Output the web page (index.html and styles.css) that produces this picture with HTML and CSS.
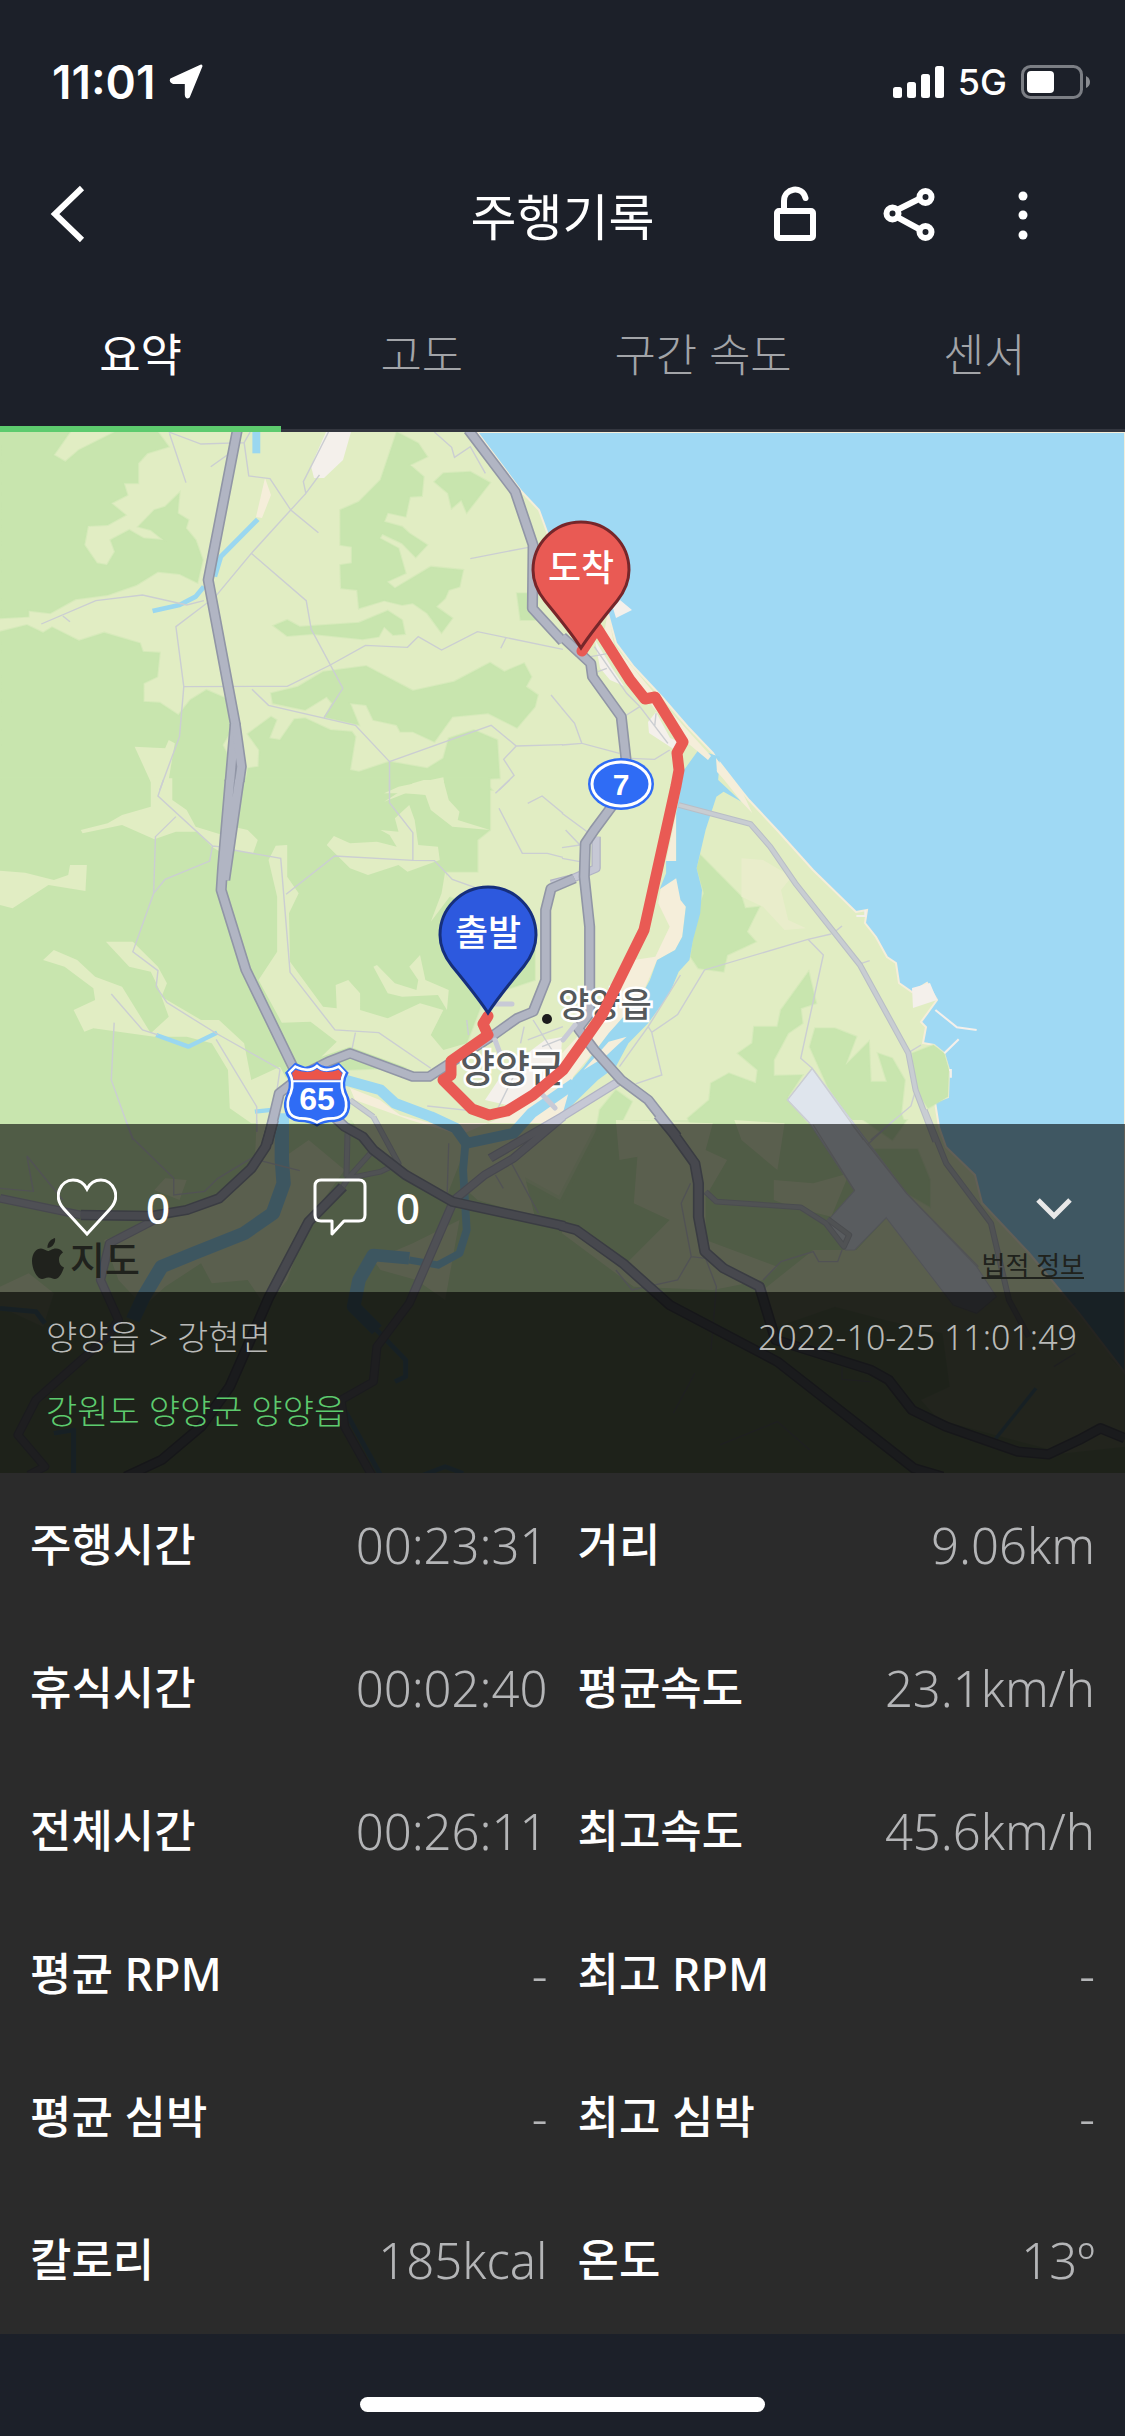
FILE: index.html
```html
<!DOCTYPE html>
<html lang="ko">
<head>
<meta charset="utf-8">
<meta name="viewport" content="width=device-width, initial-scale=1">
<title>주행기록</title>
<link rel="stylesheet" href="styles.css">
</head>
<body>
<div class="app">
  <header class="status">
    <div class="status-group">
      <span class="clock">11:01</span>
      <svg width="36" height="36" viewBox="0 0 36 36" aria-hidden="true"><path d="M2.500 15.500 L32 2 L19.500 32.500 Q17.500 34 17.300 31 V18.500 H4.500 Q1.500 17.500 2.500 15.500Z" fill="#fff" stroke="#fff" stroke-width="3" stroke-linejoin="round"/></svg>
    </div>
    <div class="status-group status-right">
      <svg width="51" height="32" viewBox="0 0 51 32" fill="#fff" aria-hidden="true"><rect y="21" width="9" height="11" rx="2.500"/><rect x="14" y="16" width="9" height="16" rx="2.500"/><rect x="28" y="8" width="9" height="24" rx="2.500"/><rect x="42" width="9" height="32" rx="2.500"/></svg>
      <span class="network">5G</span>
      <svg width="70" height="34" viewBox="0 0 70 34" aria-hidden="true"><rect x="1.500" y="1.500" width="59" height="31" rx="8" fill="none" stroke="#7b7e84" stroke-width="3"/><rect x="6" y="6" width="27" height="22" rx="4" fill="#fff"/><path d="M65 11 Q69 13 69 17 Q69 21 65 23Z" fill="#8a8c91"/></svg>
    </div>
  </header>

  <nav class="bar">
    <button class="icon-button back" type="button" aria-label="뒤로"><svg width="45" height="60" viewBox="0 0 45 60"><path d="M37 4 L10 30 L37 56" fill="none" stroke="#fff" stroke-width="6"/></svg></button>
    <h1 class="title">주행기록</h1>
    <div class="actions">
      <button class="icon-button" type="button" aria-label="공개 설정"><svg width="48" height="60" viewBox="0 0 48 60" fill="none" stroke="#fff" stroke-width="6" stroke-linecap="round"><rect x="6" y="27" width="36" height="27" rx="2"/><path d="M13 26 V17 C13 4 31 1 34.500 14"/></svg></button>
      <button class="icon-button" type="button" aria-label="공유"><svg width="54" height="60" viewBox="0 0 54 60" fill="none" stroke="#fff" stroke-width="6"><path d="M15 26 L37 15 M15 33 L37 45"/><circle cx="10.500" cy="29.500" r="6"/><circle cx="43.500" cy="13" r="6"/><circle cx="43.500" cy="48" r="6"/></svg></button>
      <button class="icon-button" type="button" aria-label="더보기"><svg width="20" height="60" viewBox="0 0 20 60" fill="#fff"><circle cx="10" cy="12" r="4.500"/><circle cx="10" cy="31" r="4.500"/><circle cx="10" cy="51" r="4.500"/></svg></button>
    </div>
  </nav>

  <nav class="tabs">
    <a class="tab active" href="#summary" aria-current="page">요약</a>
    <a class="tab" href="#altitude">고도</a>
    <a class="tab" href="#speed">구간 속도</a>
    <a class="tab" href="#sensor">센서</a>
  </nav>

  <section class="map" id="summary">
    <svg class="map-canvas" viewBox="0 432 1125 1041" role="img" aria-label="주행 경로 지도">
      <defs>
        <g id="highways">
          <g transform="translate(0 430) scale(.359 .3333)">
            <path d="M661 0 580 450 655 880 641 1055M1305 0 1435 185 1485 345 1483 535 1568 635"/>
            <path d="M655 880 672 1010 666 1055"/>
          </g>
          <g transform="translate(562 430) scale(.359 .3333)"><path d="M0 620 50 670 80 700 85 740 165 860 178 985 170 1060"/></g>
          <g transform="translate(0 780) scale(.359 .3333)">
            <path d="M641 0 620 265 616 330 685 570 820 870M666 0 626 300"/>
            <path d="M1600 295 1535 325 1520 390 1520 600 1485 695 1440 715 1375 765 1195 890 1150 890 975 820 915 845 850 880 778 940 745 1090"/>
          </g>
          <g transform="translate(562 780) scale(.359 .3333)"><path d="M145 70 90 150 65 190 62 290 77 440 77 700 45 745 90 810 165 900 240 960 320 1070"/></g>
          <g transform="translate(0 1120) scale(.359 .3333)">
            <path d="M762 0 740 80 700 145 610 235 520 270 420 288 225 285"/>
            <path d="M900 -40 960 20 1010 50 1040 90 1130 165 1260 245 1572 318"/>
            <path d="M955 200 860 305 750 530 640 800 560 920 450 1020 350 1070"/>
          </g>
          <g transform="translate(562 1120) scale(.359 .3333)">
            <path d="M-5 317 40 330 170 430 300 555 600 725 980 1045 1060 1070"/>
            <path d="M268 -15 310 40 370 130 380 190 380 290 398 395 450 445 550 500 595 660 860 750 910 780 975 870 1070 920 1270 995 1355 1003 1440 960 1500 925 1568 955"/>
          </g>
        </g>
        <g id="roads">
          <g transform="translate(562 780) scale(.359 .3333)"><path d="M325 75 525 132 580 200 650 310 830 555 965 820 985 930 1040 1085"/></g>
          <g transform="translate(562 1120) scale(.359 .3333)"><path d="M1010 -30 1070 130 1195 310 1245 540 1300 650M400 215 430 245 665 262 735 310 785 380 800 345 740 297"/></g>
          <g transform="translate(0 1120) scale(.359 .3333)"><path d="M968 40 965 170M1040 90 965 180M1040 -10 1110 130 1060 155 970 175 955 200M975 -60 1040 -10"/></g>
        </g>
        <g id="bridges">
          <g transform="translate(562 780) scale(.359 .3333)"><path d="M95 170V265L30 295-30 312M165 900 0 1010-200 1135"/></g>
          <g transform="translate(0 1120) scale(.359 .3333)">
            <path d="M0 235 225 285M430 300 305 370 280 480 330 600 300 650 100 840 50 945 125 1040 80 1065"/>
            <path d="M1568 -10 1430 115 1350 165 1265 240 1140 550 1050 680 1040 785 950 840 960 920 1035 1065"/>
          </g>
        </g>
      </defs>

      <rect class="land" y="432" width="1125" height="1041"/>

      <g class="forest">
        <g transform="translate(0 430) scale(.359 .3333)">
          <path d="M0 6H195L150 75 182 95 220 60 320 6H440L470 50 410 70 385 100 385 160 345 160 355 195 310 220 350 255 300 285 245 288 235 345 270 400 298 405 320 365 308 330 360 300 400 325 455 330 420 300 385 290 430 240 460 230 500 188 495 250 525 270 518 295 545 330 565 390 550 458 500 432 440 425 380 465 300 495 210 508 140 550 80 542 80 560 0 565Z"/>
          <path d="M0 605 75 585 120 608 145 592 220 632 290 608 390 640 398 665 445 668 438 740 400 760 400 815 445 818 497 855 530 810 575 780 640 810 645 900 620 945 632 970V1080H0Z"/>
          <path d="M1105 6 1165 40 1190 80 1142 105 1180 140 1175 198 1142 200 1130 260 1080 248 1070 275 1120 290 1140 310 1190 345 1158 382 1120 340 1065 312 1058 325 1110 355 1130 430 1078 455 1100 475 1200 410 1290 420 1280 470 1250 480 1240 505 1215 530 1260 565 1230 608 1190 550 1150 520 1120 525 1070 512 1000 535 995 480 950 475 948 405 980 400 980 350 948 345 948 240 1000 215 1060 150Z"/>
          <path d="M1210 155 1235 130 1310 125 1365 158 1300 248 1285 210 1258 235 1248 190ZM762 587 800 570 835 590 1000 578 1080 542 1120 570 1128 612 1095 615 1070 590 1055 620 1010 628 870 612 800 618ZM1440 490H1480L1500 570H1450Z"/>
          <path d="M755 790 830 770 900 725 1020 708 1150 782 1265 755 1365 698 1405 725 1460 700 1480 740 1465 770 1498 795 1490 830 1440 893 1360 850 1260 860 1210 935 1150 905 1115 905 1105 885 1040 870 1020 825 975 820 1000 885 905 862 925 820 910 800 850 840 760 820Z"/>
          <path d="M690 912 755 860 770 870 750 925 780 930 820 868 850 865 920 900 980 905 990 920 975 1020 1000 1025 1085 995 1190 1015 1235 985 1250 925 1320 900 1385 930 1392 1045 1340 1048 1370 1080H680L690 1015 720 1010 722 960Z"/>
        </g>
        <g transform="translate(0 780) scale(.359 .3333)"><path d="M0-5H1365V150L1330 180V275H1240L1250 350 1490 450V600L1350 650 1300 790 1230 830 1190 860 960 870 850 870 780 900 770 1030H0Z"/></g>
        <g transform="translate(562 780) scale(.359 .3333)">
          <path d="M385 225 440 285 500 350 510 385 550 380 515 455 540 485 460 525 450 575 380 565 358 530 375 400 395 340 375 265Z"/>
          <path d="M687 575 708 670 665 685 670 730 630 760 590 840 590 887 670 885 630 950 720 1085H380L350 1015 410 960 415 910 465 880 540 910 545 870 490 820 530 790 535 740 600 740 610 690Z"/>
          <path d="M690 800 705 745H760L820 770 790 855 855 785 860 905H905L880 820 920 835 955 900 945 1000 955 1030 925 1085H870L790 1000 740 920ZM150 930 195 965 160 1040 170 1090H90L105 990Z"/>
        </g>
        <path d="M0 1123H420L560 1200 600 1123H830L900 1200 1125 1373V1473H0Z"/>
      </g>

      <g class="land">
        <g transform="translate(0 430) scale(.359 .3333)"><path d="M375 950 460 955 470 930 487 940 465 1080H430ZM1110 1070 1235 1042 1240 1090H1070Z"/></g>
        <g transform="translate(0 780) scale(.359 .3333)">
          <path d="M420-5H480V60L520 90 545 140 620 165V220L590 200 550 155H490L430 178 340 135 230 160 225 150 300 130 340 105 420 80ZM0 272 70 278 150 300 190 285 195 255H242L238 333 135 315 35 385 0 375ZM650 140 690 150 718 180 705 220 645 210Z"/>
          <path d="M800 195 768 197 748 240 772 350 772 515 720 600 785 728 865 725 938 785 895 830 975 800 1150 870 1200 870 1300 790 1235 810 1200 765 1235 690 1170 670 1080 715 1003 690 1003 640 970 600 935 615 938 685 900 680 808 545 805 400 832 340 800 290Z"/>
          <path d="M910 195 930 168 975 190 1050 185 1105 200 1085 165 1060 150 1110 155 1100 115 1140 75 1155 120 1165 195 1220 200 1225 240 1135 275 1110 255 1025 285 975 265ZM1070 65 1150 10 1180 0H1235L1250 60 1280 95 1275 120 1365 150 1260 140 1200 90 1185 45 1130 40Z"/>
          <path d="M1040 560 1050 555 1100 610 1160 630 1165 600 1140 560 1170 525 1185 600 1250 630 1245 690 1220 645 1120 650 1080 640ZM1240 275 1260 340 1200 425 1230 340Z"/>
          <path d="M295 485H370L440 560 465 610 450 650 560 720H610L680 790 700 900 780 860 800 900 770 1030H700L640 985 635 870 590 790 520 770H430L260 745 235 755 205 690 265 660 260 625 180 560 120 540 150 510 215 540 265 590 340 620 420 760 470 710 440 620 420 575 360 560Z"/>
        </g>
        <g transform="translate(0 1120) scale(.359 .3333)">
          <path d="M715 0H780V120L860 60 960 150 860 300 800 480 740 560 690 480 590 490 560 430 460 500 400 560 330 480 290 360 460 300 600 250 710 120ZM430 210 460 175 520 180 500 240Z"/>
          <path d="M980 0H1300L1280 130 1240 240 1130 160 1040 110ZM1040 420 1150 370 1280 300 1240 540 1160 480 1060 450ZM0 500 80 460 150 520 120 620 0 560Z"/>
          <path d="M1310 0H1568L1450 120 1490 290 1330 240 1290 200Z"/>
        </g>
        <g transform="translate(562 1120) scale(.359 .3333)">
          <path d="M150 0 160 120 210 110 200 250 300 300 180 430 0 310V340L200 500 420 510 560 480 700 390 560 480 600 440 400 360 400 230 460 120 400 90 420 10ZM480 0 500 60 600 150 620 10ZM590 240V180L700 190 800 160 750 290 640 260Z"/>
          <path d="M560 510 700 390 820 390 905 293 1090 555 1400 580 1568 760V980L1400 1000 1050 900 1000 840 1080 800 1060 640 900 600 760 560 600 620Z"/>
          <path d="M790 0H1030L1070 60 1190 240 1300 400 1440 580 1150 580Z"/>
        </g>
      </g>
      <g class="forest" transform="translate(562 1120) scale(.359 .3333)"><path d="M870 88H990L1025 180V260L960 220ZM840 0H960L920 60Z"/></g>
      <g class="meadow" transform="translate(562 780) scale(.359 .3333)"><path d="M500 235 560 240 640 290 610 330 630 420 680 445 620 450 560 380 500 350Z"/></g>

      <path class="shore" d="M477 432 522 492 539 510 550 540 607 610 616 643 634 667 662 697 688 727 713 753 716 758 741 790 749 800 777 830 813 870 856 912 867 910 865 923 876 937 887 957 896 963 899 983 912 992 927 983 937 1000 921 1022 926 1027 923 1043 934 1045 944 1053 949 1070 948 1097 935 1102 939 1127 946 1147 975 1175 982 1203 1029 1253 1079 1313 1125 1373V432Z"/>
      <path class="town" d="M912 988 930 983 937 1000 913 1008ZM613 608 620 600 632 610 616 618ZM351 432H326L311 466 314 478H324L343 460Z"/>
      <g class="forest" transform="translate(562 780) scale(.359 .3333)"><path d="M975 820 1035 795 1065 820 1078 870 1075 950 1020 985 985 930Z"/></g>

      <g transform="translate(562 780) scale(.359 .3333)">
        <path class="sand" d="M318 290 345 380 335 470 315 510 265 540 225 640 0 930V820L120 680 200 540 260 530 300 440 268 370 275 325ZM318 100V243H290Z"/>
        <path class="river" d="M340-30 318 100V243H290V280L272 328 318 295 330 360 345 380 335 470 315 510 265 540 245 600 225 640 180 700 130 760 60 860 0 930V1005L100 900 150 860 185 790 240 730 300 640 325 575 355 540 365 480 385 400 390 330 375 265 400 150 430 50 450 35 500 65 435 0 440-70 380-90Z"/>
        <path class="sand" d="M430-30 500 65 530 100 500 30 470-5ZM60 870 130 785 180 770 120 830Z"/>
      </g>
      <path class="sand" d="M608 611 614 645 660 700 711 756 708 760 672 730 598 640 605 628Z"/>
      <path class="sand" d="M716 758 741 790 735 790 717 772ZM350 1088 380 1100 400 1115 430 1123H560L575 1070 500 1118 460 1135 410 1120 355 1100ZM265 478 271 495 262 518 256 517Z"/>
      <path class="town" d="M595 640 612 668 624 686 610 680 600 668ZM656 712 670 738 680 742 675 750 649 733 648 722ZM545 1040 562 1037 560 1080 520 1108 485 1100 505 1070Z"/>

      <g class="stream">
        <g transform="translate(0 430) scale(.359 .3333)"><path d="M718 268 615 380 598 440M568 470 545 500 500 525 425 543" stroke-width="14"/><path d="M714 0V70" stroke-width="22"/></g>
        <g transform="translate(0 780) scale(.359 .3333)">
          <path d="M435 765 525 800 605 758M710 995 770 988" stroke-width="13"/>
          <path d="M960 900 1060 930 1100 970 1200 1010 1270 1045 1300 1090 1430 1060 1480 1000 1600 910" stroke-width="32"/>
        </g>
        <g transform="translate(0 1120) scale(.359 .3333)">
          <path d="M785-20V120L790 190 760 280 680 340 540 400 450 440 400 530 370 600" stroke-width="40"/>
          <path d="M1298 50 1290 150 1300 330 1280 400 1220 435 1140 420" stroke-width="22"/>
          <path d="M1140 415 1040 405 1000 480 985 560 1050 630" stroke-width="38"/>
          <path d="M0 565 100 575 125 610M150 940 205 930 205 1065M960 870 1060 1065M1180 1065 1240 1040 1290 1060M1040 620 1130 720V770L1100 785" stroke-width="14"/>
        </g>
        <g transform="translate(562 1120) scale(.359 .3333)"><path d="M1320 805 1205 960" stroke-width="10"/></g>
      </g>

      <path class="runway" transform="translate(562 1120) scale(.359 .3333)" d="M697-155 628-60 690 10 815 212 750 290 735 320 790 390H815L903 293 1090 555 1155 580 1210 530 1155 440 960 220Z"/>
      <g transform="translate(562 780) scale(.359 .3333)"><path class="pier" d="M1040 690 1100 742 1155 750M1105 778 1065 820M820 408H845L845 390M1078 870H1083V893"/></g>

      <g class="lanes">
        <g transform="translate(0 430) scale(.359 .3333)">
          <path d="M470 6 560 42 680 38 697 6M472 10 518 158M680 38 693 138 752 146 810 240 887 308M640 70 587 110M915 6 845 155 852 190 890 135M852 190 700 370 600 500 490 590 512 770 500 920 445 1080M700 370 853 512 867 598 955 775 903 862M568 512 520 525 397 495 267 512 115 582M175 558 195 575M512 770 800 769 920 705 1018 646 1135 652 1165 620 1230 660 1330 605 1568 658M1410 622 1395 655M702 778 748 826 990 886 1085 995V1080M1085 995 1368 886 1438 948 1568 944M1438 948 1403 988 1432 1036 1390 1080M1210 6 1258 52 1266 82 1310 50 1352 130M1310 386 1472 352M1535 795 1568 838"/>
        </g>
        <g transform="translate(562 430) scale(.359 .3333)"><path d="M0 835 35 880 55 940 160 970M0 945 55 940M190 985 258 988 300 960M180 855 217 830 180 790 90 650M217 830 295 940M262 850 258 890M125 715 100 725M80 680 130 670"/></g>
        <g transform="translate(0 780) scale(.359 .3333)">
          <path d="M455 0 440 48 592 198 610 200M490 110 433 170 428 340 370 515 440 572 435 620 465 668 602 760 780 868M592 198 584 243 460 298 428 340M650 210 782 235 808 577 933 750 1055 758 1200 865M990 758 980 810M797 343 932 228 1150 241 1210 242 1260 298 1330 325M1085 0V68L1150 158V241M310 642 397 750 440 765M318 728 310 900 370 1080M602 778 715 980V1055M780 868 770 940M1390 85 1455 220H1525L1568 232M1380 40 1420 0M1470 70 1510 48 1568 100M1300 720 1305 765M1460 740 1450 790M1485 720 1555 840M1470 780 1568 740M1510 800 1568 775M1190 978 1380 1000 1430 890"/>
        </g>
        <g transform="translate(562 780) scale(.359 .3333)">
          <path d="M0 100 70 155M0 203 50 195M0 235 50 245M10 150 50 195M750 462 685 478 397 570 322 704 250 757 240 740M250 757 278 885 205 912M685 478 728 525 665 835 697 865 628 960 690 1030M760 455 780 438M830 552 857 542M965 818 1000 795M697 865 840 1080M985 930 972 978 860 1080M330 585 240 740 160 860"/>
        </g>
        <g transform="translate(0 1120) scale(.359 .3333)"><path d="M350 0 370 55 484 175V225L570 214 607 175 700 115 835 152M75 108 93 214 0 205M75 108 175 240M715 0V35M1250 70 1245 240M1425 130 1500 280M1380 165 1402 205"/></g>
        <g transform="translate(562 1120) scale(.359 .3333)"><path d="M358 190 332 250 360 410 322 480 195 510 150 450M360 410 400 415 430 500 415 690M700 15 815 212M560 480 610 425 700 395 715 425H768L780 390M805 10 960 220 1160 440M850 75 925 0M780 740V778L860 785M1370 740 1430 700M440 975 600 905 690 990M370 760 310 880"/></g>
      </g>

      <use class="bridge-casing" href="#bridges"/><use class="bridge" href="#bridges"/>
      <use class="road-casing" href="#roads"/><use class="road" href="#roads"/>
      <use class="highway-casing" href="#highways"/><use class="highway" href="#highways"/>
      <path class="street" d="M488 1004H512M495 1040 501 1056M536 1088 555 1108M563 1040 575 1025"/>

      <ellipse cx="621" cy="784" rx="33" ry="26" fill="#2f6cf5"/>
      <ellipse cx="621" cy="784" rx="29" ry="22" fill="none" stroke="#fff" stroke-width="3"/>
      <text class="shield-text" x="621" y="795">7</text>

      <g transform="translate(270 1010) scale(.3333)">
        <path d="M75 158 105 170 Q130 168 141 155 Q152 168 178 170 L207 158 236 188 Q218 218 231 248 Q248 280 236 308 Q228 332 195 336 Q160 336 141 350 Q120 336 87 336 Q50 330 45 305 Q36 280 51 248 Q64 218 45 188Z" fill="#2f6cf5"/>
        <path d="M76 170 Q118 190 141 168 Q164 190 206 170 L223 188 Q209 216 219 249 Q234 277 226 303 Q217 322 192 325 Q161 324 141 337 Q120 324 88 325 Q61 320 56 301 Q48 277 62 249 Q74 216 58 188Z" fill="#2f6cf5" stroke="#fff" stroke-width="8"/>
        <path d="M76 179 Q118 194 141 177 Q164 194 206 179 L216 190 211 209H71L66 190Z" fill="#ec5549"/>
        <path d="M68 214H214" stroke="#fff" stroke-width="6"/>
      </g>
      <text class="shield-text shield-large" x="317" y="1110">65</text>

      <circle cx="547" cy="1019" r="5" fill="#1c1c1c"/>
      <text class="place" x="558" y="1017">양양읍</text>
      <text class="place place-large" x="460" y="1082">양양군</text>

      <path class="route" d="M582 651 597 628 630 680 645 699 655 697 683 742 677 753 679 770 676 786 644 930 602 1015 583 1042 563 1070 533 1095 507 1111 489 1115 472 1109 443 1080 451 1075V1061L488 1035 483 1024 488 1016"/>

      <g transform="translate(581 648)">
        <path d="M0 0C-9-14-22-30-36-47C-44-57-48-68-48-78A48 48 0 0 1 48-78C48-68 44-57 36-47C22-30 9-14 0 0Z" fill="#e95a54" stroke="#77262a" stroke-width="3"/>
        <text class="pin-text" y="-67">도착</text>
      </g>
      <g transform="translate(488 1013)">
        <path d="M0 0C-9-14-22-30-36-47C-44-57-48-68-48-78A48 48 0 0 1 48-78C48-68 44-57 36-47C22-30 9-14 0 0Z" fill="#2d59de" stroke="#162f7c" stroke-width="3"/>
        <text class="pin-text" y="-67">출발</text>
      </g>
    </svg>

    <div class="attribution">
      <span class="provider"><svg width="32" height="42" viewBox="0 0 32 42" fill="currentColor" aria-hidden="true"><path d="M23 0C24 5 20 10 15.500 10C15 5 19 1 23 0ZM16 13C18 13 20 10.500 24 10.500C27 10.500 29.500 12 31 14.500C25 18 26 27 32 29.500C30 35 27 41 23 41C20.500 41 19.500 39.500 16.500 39.500C13.500 39.500 12.500 41 10 41C5 41 0 31 0 23C0 15 4.500 10.500 9 10.500C12 10.500 14 13 16 13Z"/></svg>지도</span>
      <a class="legal" href="#legal">법적 정보</a>
    </div>

    <div class="overlay">
      <div class="social">
        <button class="count" type="button" aria-label="좋아요"><svg width="60" height="60" viewBox="0 0 60 60"><path d="M30 56 L7 31C-5 18 4 2 16 2C24 2 28 7 30 11C32 7 36 2 44 2C56 2 65 18 53 31Z" fill="none" stroke="#fff" stroke-width="3"/></svg><span>0</span></button>
        <button class="count" type="button" aria-label="댓글"><svg width="54" height="60" viewBox="0 0 54 60"><path d="M8 2H46Q52 2 52 8V37Q52 43 46 43H31L19 56V43H8Q2 43 2 37V8Q2 2 8 2Z" fill="none" stroke="#fff" stroke-width="3" stroke-linejoin="round"/></svg><span>0</span></button>
        <button class="icon-button collapse" type="button" aria-label="접기"><svg width="36" height="24" viewBox="0 0 36 24"><path d="M2 4 L18 20 L34 4" fill="none" stroke="#e8e8e8" stroke-width="5"/></svg></button>
      </div>
      <div class="ride-info">
        <div class="ride-line"><span>양양읍 &gt; 강현면</span><time class="date" datetime="2022-10-25T11:01:49">2022-10-25 11:01:49</time></div>
        <div class="ride-line region">강원도 양양군 양양읍</div>
      </div>
    </div>
  </section>

  <dl class="stats">
    <div class="stat"><dt>주행시간</dt><dd>00:23:31</dd></div>
    <div class="stat"><dt>거리</dt><dd>9.06km</dd></div>
    <div class="stat"><dt>휴식시간</dt><dd>00:02:40</dd></div>
    <div class="stat"><dt>평균속도</dt><dd>23.1km/h</dd></div>
    <div class="stat"><dt>전체시간</dt><dd>00:26:11</dd></div>
    <div class="stat"><dt>최고속도</dt><dd>45.6km/h</dd></div>
    <div class="stat"><dt>평균 RPM</dt><dd>-</dd></div>
    <div class="stat"><dt>최고 RPM</dt><dd>-</dd></div>
    <div class="stat"><dt>평균 심박</dt><dd>-</dd></div>
    <div class="stat"><dt>최고 심박</dt><dd>-</dd></div>
    <div class="stat"><dt>칼로리</dt><dd>185kcal</dd></div>
    <div class="stat"><dt>온도</dt><dd>13º</dd></div>
  </dl>

  <footer class="home"><div class="home-bar"></div></footer>
</div>
</body>
</html>
```
FILE: styles.css
```css
* { box-sizing: border-box; }

body {
  margin: 0;
  background: #1c2029;
  color: #fff;
  font-family: "Noto Sans", "Noto Sans CJK KR", sans-serif;
}

.app {
  display: flex;
  flex-direction: column;
  min-height: 100vh;
}

svg { display: block; flex: none; }

button {
  margin: 0;
  padding: 0;
  border: 0;
  background: none;
  color: inherit;
  font: inherit;
}

/* status bar */
.status {
  display: flex;
  justify-content: space-between;
  padding: 50px 34px 30px 52px;
}

.status-group {
  display: flex;
  align-items: center;
  gap: 14px;
  height: 64px;
  font-family: Inter, "Noto Sans", sans-serif;
}

.clock { font-size: 46px; font-weight: 600; }
.network { font-size: 36px; font-weight: 500; }

/* title bar */
.bar {
  display: grid;
  grid-template-columns: 1fr auto 1fr;
  align-items: center;
  height: 140px;
  padding: 0 45px;
}

.icon-button {
  display: grid;
  place-items: center;
  width: 114px;
  height: 114px;
}

.back { justify-items: start; }

.title {
  margin: 0;
  font-family: "Noto Sans CJK KR", sans-serif;
  font-size: 50px;
  font-weight: 400;
  line-height: 74px;
}

.actions { display: flex; justify-content: flex-end; }

/* tabs */
.tabs {
  display: grid;
  grid-template-columns: repeat(4, 1fr);
  height: 148px;
  box-shadow: inset 0 -3px #33363f;
}

.tab {
  display: grid;
  place-items: center;
  border-bottom: 6px solid transparent;
  color: #a2a4a8;
  font-size: 45px;
  font-weight: 300;
  line-height: 60px;
  text-decoration: none;
}

.tab.active { border-color: #5dcb6e; color: #fff; font-weight: 400; }

/* map */
.map { display: grid; }
.map > * { grid-area: 1 / 1; }
.map-canvas { width: 100%; height: auto; }
.land { fill: #e1edc3; }
.forest { fill: #c8e5ae; stroke: #c8e5ae; stroke-opacity: .4; stroke-width: 6; }
.meadow { fill: #e9edcb; }
.shore { fill: #9fd9f4; stroke: #f5eeda; stroke-width: 2; }
.river { fill: #9ad7f0; }
.stream { fill: none; stroke: #9ad7f0; stroke-linejoin: round; }
.sand { fill: #f5eeda; }
.town { fill: #f4f0eb; }
.runway { fill: #dfe5ed; stroke: #cdd1dc; stroke-width: 3; }
.pier { fill: none; stroke: #f4f0eb; stroke-width: 6; }
.lanes { fill: none; stroke: #cbced2; stroke-width: 4; }
.bridge-casing, .bridge, .road-casing, .road, .highway-casing, .highway { fill: none; stroke-linejoin: round; }
.bridge-casing { stroke: #b1b3c4; stroke-width: 26; }
.bridge { stroke: #c6c8d5; stroke-width: 19; }
.road-casing { stroke: #b9bec6; stroke-width: 17; }
.road { stroke: #c8cdd2; stroke-width: 11; }
.highway-casing { stroke: #9196a6; stroke-width: 31; }
.highway { stroke: #b1b5c3; stroke-width: 22; }
.street { fill: none; stroke: #c8cad6; stroke-width: 5; stroke-linecap: round; }
.route { fill: none; stroke: #e95a54; stroke-width: 11; stroke-linejoin: round; stroke-linecap: round; }

.place {
  fill: #55595c;
  stroke: #fff;
  stroke-width: 5;
  paint-order: stroke;
  font-size: 34px;
  font-weight: 500;
}

.place-large { font-size: 38px; }
.pin-text { fill: #fff; font-size: 36px; font-weight: 500; text-anchor: middle; }
.shield-text { fill: #fff; font-family: "Liberation Sans", sans-serif; font-size: 30px; font-weight: 700; text-anchor: middle; }
.shield-large { font-size: 32px; }

.attribution {
  display: flex;
  align-self: end;
  justify-content: space-between;
  align-items: flex-end;
  padding: 0 41px 190px 32px;
  color: #50554a;
}

.provider {
  display: flex;
  align-items: center;
  gap: 6px;
  font-size: 38px;
  font-weight: 500;
  line-height: 48px;
}

.legal { color: inherit; font-size: 26px; line-height: 36px; }

.overlay { align-self: end; }

.social {
  display: flex;
  align-items: center;
  height: 168px;
  padding: 0 14px 0 57px;
  background: rgba(0, 0, 0, .6);
}

.count {
  display: flex;
  align-items: center;
  gap: 29px;
  width: 256px;
  font-size: 42px;
  font-weight: 500;
}

.count span { line-height: 60px; }
.collapse { margin-left: auto; }

.ride-info {
  padding: 8px 48px 25px 46px;
  background: rgba(0, 0, 0, .85);
}

.ride-line {
  display: flex;
  justify-content: space-between;
  color: #b9bab8;
  font-size: 34px;
  font-weight: 300;
  line-height: 74px;
}

.region { color: #5dcb6e; }

/* statistics */
.stats {
  display: grid;
  grid-template-columns: 1fr 1fr;
  column-gap: 30px;
  margin: 0;
  padding: 0 30px 3px;
  background: #2b2b2b;
}

.stat {
  display: flex;
  align-items: center;
  justify-content: space-between;
  height: 143px;
  line-height: 60px;
}

dt { font-size: 45px; font-weight: 500; }
dd { margin: 0; color: #b4b5b7; font-size: 49px; font-weight: 300; }

/* home indicator */
.home {
  display: grid;
  justify-items: center;
  padding: 63px 0 24px;
}

.home-bar {
  width: 36%;
  height: 15px;
  border-radius: 8px;
  background: #fff;
}
```
